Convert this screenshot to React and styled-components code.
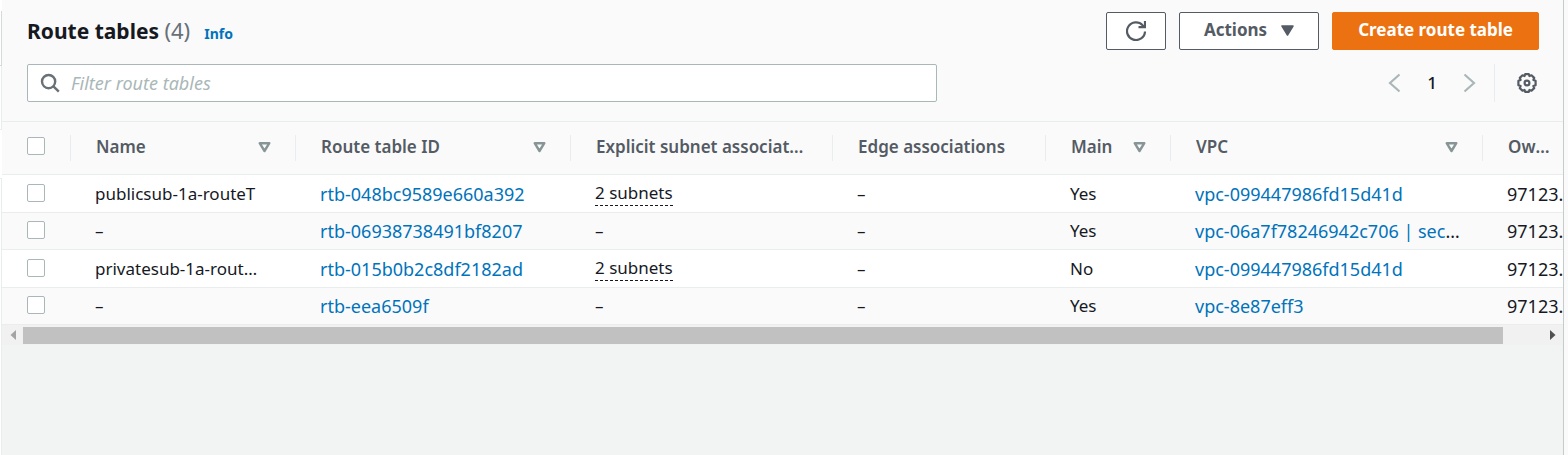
import React from "react";
import styled, { createGlobalStyle, css } from "styled-components";

const GlobalStyle = createGlobalStyle`
  *, *::before, *::after { box-sizing: border-box; }
  body {
    margin: 0;
    background: #f2f3f3;
    color: #16191f;
    font-family: "Noto Sans", "Open Sans", sans-serif;
    font-size: 17px;
    line-height: 24px;
  }
  button, input { font: inherit; }
`;

const Shell = styled.div`
  display: flex;
  min-height: 100vh;
`;

const SidePanels = styled.aside`
  flex: 0 0 2px;
  display: flex;
  flex-direction: column;
  background: #ffffff;
`;

const SidePanel = styled.div`
  flex: ${(p) => (p.$height ? `0 0 ${p.$height}px` : "1")};
  border: solid ${(p) => (p.$strong ? "#d5dbdb" : "#eaeded")};
  border-width: ${(p) => (p.$height ? "0 1px 1px 0" : "1px 1px 0 0")};
`;

const SideGap = styled.div`
  flex: 0 0 ${(p) => p.$height}px;
`;

const Main = styled.main`
  flex: 1;
  min-width: 0;
  border-right: 1px solid #c5cccc;
`;

const Gutter = styled.div`
  flex: 0 0 4px;
  background: #fafafa;
`;

const Header = styled.header`
  padding: 12px 24px 19px 25px;
  background: #fafafa;
  border-bottom: 1px solid #eaeded;
`;

const HeaderRow = styled.div`
  display: flex;
  align-items: center;
  justify-content: space-between;
  height: 38px;
  margin-bottom: ${(p) => (p.$spaced ? "14px" : "0")};
`;

const TitleGroup = styled.div`
  display: flex;
  align-items: baseline;
  gap: 14px;
  padding-bottom: 2px;
`;

const Title = styled.h1`
  margin: 0;
  font-size: 21px;
  line-height: 36px;
  font-weight: 700;
`;

const Count = styled.span`
  color: #687078;
  font-size: 22px;
  font-weight: 400;
`;

const InfoLink = styled.a`
  color: #0073bb;
  font-size: 14px;
  font-weight: 700;
  text-decoration: none;
`;

const ButtonGroup = styled.div`
  display: flex;
  gap: 13px;
`;

const Button = styled.button`
  display: flex;
  align-items: center;
  justify-content: center;
  gap: 14px;
  height: 38px;
  padding: 0 24px 2px;
  border: 1px solid #545b64;
  border-radius: 2px;
  background: #ffffff;
  color: #545b64;
  font-weight: 700;
  white-space: nowrap;
  ${(p) => p.$icon && css`padding: 0 19px;`}
  ${(p) =>
    p.$primary &&
    css`
      padding: 0 25px 2px;
      border-color: #ec7211;
      background: #ec7211;
      color: #ffffff;
    `}
`;

const SearchBox = styled.label`
  display: flex;
  align-items: center;
  gap: 11px;
  width: 60.2%;
  height: 38px;
  padding: 0 12px;
  border: 1px solid #aab7b8;
  border-radius: 2px;
  background: #ffffff;
`;

const SearchInput = styled.input`
  flex: 1;
  min-width: 0;
  padding: 0;
  border: 0;
  outline: 0;
  background: transparent;
  color: #16191f;
  font-size: 18px;
  &::placeholder {
    color: #aab7b8;
    font-style: italic;
    opacity: 1;
  }
`;

const Pager = styled.nav`
  display: flex;
  align-items: center;
  height: 38px;
`;

const PlainButton = styled.button`
  display: flex;
  padding: 0;
  border: 0;
  background: transparent;
  color: ${(p) => (p.$muted ? "#aab7b8" : "#545b64")};
`;

const PageNumber = styled.span`
  width: 54px;
  font-weight: 500;
  text-align: center;
`;

const Settings = styled.div`
  display: flex;
  align-items: center;
  height: 100%;
  margin-left: 15px;
  padding: 0 2px 0 22px;
  border-left: 1px solid #eaeded;
`;

const TableClip = styled.div`
  overflow: hidden;
`;

const Table = styled.table`
  width: 100%;
  table-layout: fixed;
  border-collapse: separate;
  border-spacing: 0;
  background: #ffffff;
`;

const Col = styled.col`
  width: ${(p) => (p.$width ? `${p.$width}px` : "auto")};
`;

const HeadCell = styled.th`
  height: 53px;
  padding: 0;
  background: #fafafa;
  border-bottom: 1px solid #eaeded;
  color: #545b64;
  font-weight: 600;
  text-align: left;
`;

const HeadInner = styled.div`
  display: flex;
  align-items: center;
  justify-content: space-between;
  height: 26px;
  padding: 0 ${(p) => (p.$last ? "8px" : "24px")} 2px 25px;
  border-right: 1px solid ${(p) => (p.$last ? "transparent" : "#eaeded")};
`;

const Ellipsis = styled.span`
  min-width: 0;
  overflow: hidden;
  text-overflow: ellipsis;
  white-space: nowrap;
`;

const Row = styled.tr`
  height: 38px;
  &:nth-child(even) {
    height: 37px;
    background: #fafafa;
  }
`;

const Cell = styled.td`
  padding: 0 32px 0 24px;
  border-bottom: 1px solid #eaeded;
  overflow: hidden;
  text-overflow: ellipsis;
  white-space: nowrap;
`;

const CodeCell = styled(Cell)`
  padding-right: ${(p) => (p.$last ? "0" : "20px")};
  font-size: 18px;
  text-overflow: ${(p) => (p.$last ? "clip" : "ellipsis")};
`;

const CheckCell = styled(Cell)`
  padding: 0 25px;
`;

const Checkbox = styled.input`
  display: block;
  appearance: none;
  width: 18px;
  height: 18px;
  margin: 0 0 2px;
  border: 1px solid #aab7b8;
  border-radius: 2px;
  background: #ffffff;
`;

const Link = styled.a`
  color: #0073bb;
  text-decoration: none;
`;

const Popover = styled.button`
  display: block;
  padding: 0;
  border: 0;
  border-bottom: 1px dashed #16191f;
  background: transparent;
  color: #16191f;
`;

const ScrollBar = styled.div`
  display: flex;
  align-items: center;
  height: 20px;
  padding: 0 7px 0 8px;
  background: #f1f1f1;
`;

const ScrollTrack = styled.div`
  flex: 1;
  margin: 0 7px;
`;

const ScrollThumb = styled.div`
  width: 97.4%;
  height: 17px;
  background: #c1c1c1;
`;

const SortIcon = () => (
  <svg width="13" height="12" viewBox="0 0 13 12" aria-hidden="true">
    <path d="M1.7 2.2h9.6L6.5 10z" fill="none" stroke="#879596" strokeWidth="2.4" strokeLinejoin="round" />
  </svg>
);

const Arrow = ({ left }) => (
  <svg width="20" height="20" viewBox="0 0 20 20" fill="none" stroke="currentColor" strokeWidth="2.2" aria-hidden="true">
    <path d={left ? "M14.5 1.5L5 10l9.5 8.5" : "M5.5 1.5L15 10l-9.5 8.5"} />
  </svg>
);

const ScrollArrow = ({ left }) => (
  <svg width="6" height="10" viewBox="0 0 6 10" aria-hidden="true">
    <path d={left ? "M6 0v10L0.5 5z" : "M0 0v10L5.5 5z"} fill={left ? "#a3a3a3" : "#505050"} />
  </svg>
);

const RefreshIcon = () => (
  <svg width="20" height="20" viewBox="0 0 20 20" fill="none" stroke="currentColor" strokeWidth="2.2" aria-hidden="true">
    <path d="M19 10.5a9 8.8 0 1 1-2.4-6.3L18.5 6" />
    <path d="M19 0v6.2h-6.5" />
  </svg>
);

const SearchIcon = () => (
  <svg width="20" height="20" viewBox="0 0 20 20" fill="none" stroke="#687078" strokeWidth="2.4" aria-hidden="true">
    <circle cx="8.6" cy="8.6" r="6.6" />
    <path d="M13.2 13.2l5.6 5.4" />
  </svg>
);

const GearIcon = () => (
  <svg width="20" height="20" viewBox="0 0 20 20" fill="none" stroke="currentColor" strokeWidth="2.2" strokeLinejoin="round" aria-hidden="true">
    <path d="M8.2 1.1h3.6l.7 1.9 2-.7 2.7 2.6-.8 2 2.200.9v4.400l-2.200.9.8 2-2.700 2.600-2-.7-.7 1.900H8.200L7.500 17l-2 .7-2.700-2.600.8-2-2.200-.9V7.800l2.200-.9-.8-2 2.700-2.600 2 .7z" />
    <circle cx="10" cy="10" r="2.4" />
  </svg>
);

const columns = [
  { label: "Name", width: 225, sortable: true },
  { label: "Route table ID", width: 275, sortable: true },
  { label: "Explicit subnet associations", width: 262 },
  { label: "Edge associations", width: 213 },
  { label: "Main", width: 125, sortable: true },
  { label: "VPC", sortable: true },
  { label: "Owner ID", width: 80 },
];

const rows = [
  { name: "publicsub-1a-routeT", id: "rtb-048bc9589e660a392", subnets: 2, main: "Yes", vpc: "vpc-099447986fd15d41d" },
  { name: "–", id: "rtb-06938738491bf8207", main: "Yes", vpc: "vpc-06a7f78246942c706 | security" },
  { name: "privatesub-1a-routeTable", id: "rtb-015b0b2c8df2182ad", subnets: 2, main: "No", vpc: "vpc-099447986fd15d41d" },
  { name: "–", id: "rtb-eea6509f", main: "Yes", vpc: "vpc-8e87eff3" },
];

export default function App() {
  return (
    <>
      <GlobalStyle />
      <Shell>
        <SidePanels>
          <SideGap $height={11} />
          <SidePanel $height={55} $strong />
          <SidePanel $height={64} />
          <SideGap $height={48} />
          <SidePanel />
        </SidePanels>
        <Main>
          <Header>
            <HeaderRow $spaced>
              <TitleGroup>
                <Title>
                  Route tables <Count>(4)</Count>
                </Title>
                <InfoLink href="#info">Info</InfoLink>
              </TitleGroup>
              <ButtonGroup>
                <Button type="button" $icon aria-label="Refresh">
                  <RefreshIcon />
                </Button>
                <Button type="button">
                  Actions
                  <svg width="13" height="12" viewBox="0 0 13 12" aria-hidden="true">
                    <path d="M1 2h11L6.5 11z" fill="currentColor" stroke="currentColor" strokeWidth="1.5" strokeLinejoin="round" />
                  </svg>
                </Button>
                <Button type="button" $primary>
                  Create route table
                </Button>
              </ButtonGroup>
            </HeaderRow>
            <HeaderRow>
              <SearchBox>
                <SearchIcon />
                <SearchInput type="text" placeholder="Filter route tables" aria-label="Filter route tables" />
              </SearchBox>
              <Pager aria-label="Pages">
                <PlainButton type="button" $muted aria-label="Previous page">
                  <Arrow left />
                </PlainButton>
                <PageNumber>1</PageNumber>
                <PlainButton type="button" $muted aria-label="Next page">
                  <Arrow />
                </PlainButton>
                <Settings>
                  <PlainButton type="button" aria-label="Preferences">
                    <GearIcon />
                  </PlainButton>
                </Settings>
              </Pager>
            </HeaderRow>
          </Header>
          <TableClip>
            <Table>
              <colgroup>
                <Col $width={69} />
                {columns.map((c) => (
                  <Col key={c.label} $width={c.width} />
                ))}
              </colgroup>
              <thead>
                <tr>
                  <HeadCell>
                    <HeadInner>
                      <Checkbox type="checkbox" aria-label="Select all" />
                    </HeadInner>
                  </HeadCell>
                  {columns.map((c, i) => (
                    <HeadCell key={c.label}>
                      <HeadInner $last={i === columns.length - 1}>
                        <Ellipsis>{c.label}</Ellipsis>
                        {c.sortable && <SortIcon />}
                      </HeadInner>
                    </HeadCell>
                  ))}
                </tr>
              </thead>
              <tbody>
                {rows.map((r) => (
                  <Row key={r.id}>
                    <CheckCell>
                      <Checkbox type="checkbox" aria-label={`Select ${r.id}`} />
                    </CheckCell>
                    <Cell>{r.name}</Cell>
                    <CodeCell>
                      <Link href={`#${r.id}`}>{r.id}</Link>
                    </CodeCell>
                    <Cell>{r.subnets ? <Popover type="button">{r.subnets} subnets</Popover> : "–"}</Cell>
                    <Cell>–</Cell>
                    <Cell>{r.main}</Cell>
                    <CodeCell>
                      <Link href="#vpc">{r.vpc}</Link>
                    </CodeCell>
                    <CodeCell $last>97123…</CodeCell>
                  </Row>
                ))}
              </tbody>
            </Table>
          </TableClip>
          <ScrollBar>
            <PlainButton type="button" aria-label="Scroll left">
              <ScrollArrow left />
            </PlainButton>
            <ScrollTrack>
              <ScrollThumb />
            </ScrollTrack>
            <PlainButton type="button" aria-label="Scroll right">
              <ScrollArrow />
            </PlainButton>
          </ScrollBar>
        </Main>
        <Gutter />
      </Shell>
    </>
  );
}
